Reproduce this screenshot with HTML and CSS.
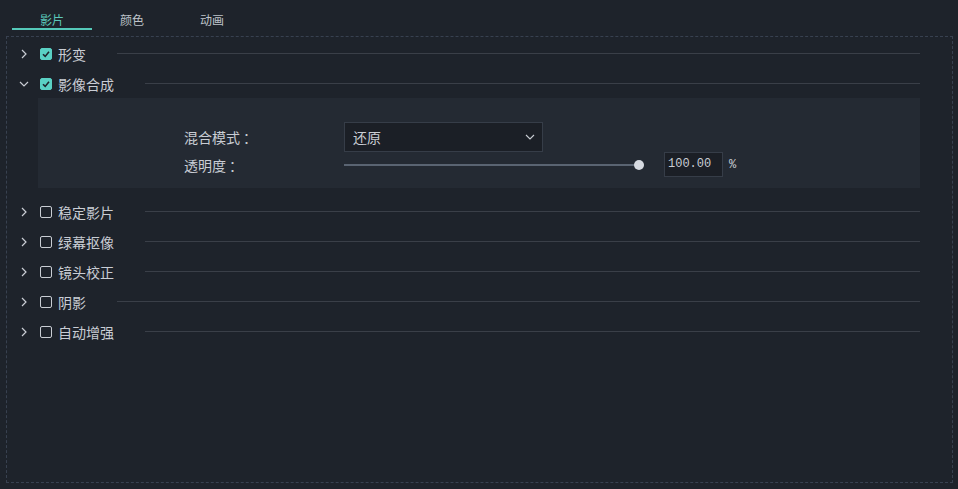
FILE: index.html
```html
<!DOCTYPE html>
<html lang="zh">
  <head>
    <meta charset="UTF-8" />
    <title>影片</title>
    <link rel="stylesheet" href="styles.css">
  </head>
  <body>
    <div class="tabs">
      <div class="tab active">影片</div>
      <div class="tab">颜色</div>
      <div class="tab">动画</div>
    </div>

    <div class="box">
      <div class="row">
        <span class="arrow"><svg width="10" height="10" viewBox="0 0 10 10"><polyline points="3,1 7,5 3,9" /></svg></span>
        <span class="check on"><svg width="12" height="12" viewBox="0 0 12 12"><polyline points="3,6.2 5.2,8.4 9,3.8" /></svg></span>
        <span class="name">形变</span>
        <span class="rule"></span>
      </div>
      <div class="row">
        <span class="arrow"><svg width="10" height="10" viewBox="0 0 10 10"><polyline points="1,3 5,7 9,3" /></svg></span>
        <span class="check on"><svg width="12" height="12" viewBox="0 0 12 12"><polyline points="3,6.2 5.2,8.4 9,3.8" /></svg></span>
        <span class="name">影像合成</span>
        <span class="rule"></span>
      </div>
      <div class="panel">
        <div class="field">
          <label class="lbl">混合模式<span class="colon">：</span></label>
          <div class="select">
            <span>还原</span>
            <svg width="10" height="6" viewBox="0 0 10 6"><polyline points="1,1 5,5 9,1" /></svg>
          </div>
        </div>
        <div class="field slim">
          <label class="lbl">透明度<span class="colon">：</span></label>
          <div class="slider"><span class="thumb"></span></div>
          <div class="num">100.00</div>
          <span class="unit">%</span>
        </div>
      </div>
      <div class="row">
        <span class="arrow"><svg width="10" height="10" viewBox="0 0 10 10"><polyline points="3,1 7,5 3,9" /></svg></span>
        <span class="check"></span>
        <span class="name">稳定影片</span>
        <span class="rule"></span>
      </div>
      <div class="row">
        <span class="arrow"><svg width="10" height="10" viewBox="0 0 10 10"><polyline points="3,1 7,5 3,9" /></svg></span>
        <span class="check"></span>
        <span class="name">绿幕抠像</span>
        <span class="rule"></span>
      </div>
      <div class="row">
        <span class="arrow"><svg width="10" height="10" viewBox="0 0 10 10"><polyline points="3,1 7,5 3,9" /></svg></span>
        <span class="check"></span>
        <span class="name">镜头校正</span>
        <span class="rule"></span>
      </div>
      <div class="row">
        <span class="arrow"><svg width="10" height="10" viewBox="0 0 10 10"><polyline points="3,1 7,5 3,9" /></svg></span>
        <span class="check"></span>
        <span class="name">阴影</span>
        <span class="rule"></span>
      </div>
      <div class="row">
        <span class="arrow"><svg width="10" height="10" viewBox="0 0 10 10"><polyline points="3,1 7,5 3,9" /></svg></span>
        <span class="check"></span>
        <span class="name">自动增强</span>
        <span class="rule"></span>
      </div>
    </div>
  </body>
</html>
```

FILE: styles.css
```css
/* base */
body {
    margin: 0;
    background-color: #1e232b;
    color: #c9cdd4;
    font-family: "Noto Sans CJK SC", "Noto Sans", sans-serif;
    font-size: 14px;
}

/* tabs */
.tabs {
    display: flex;
    padding-left: 12px;
    height: 36px;
}

.tab {
    width: 80px;
    padding-top: 11px;
    height: 17px;
    line-height: 17px;
    font-size: 12px;
    text-align: center;
    color: #bfc3ca;
    border-bottom: 2px solid transparent;
}

.tab.active {
    color: #5cc8ba;
    border-bottom-color: #55c9b9;
}

/* dashed box */
.box {
    margin: 0 5px 0 6px;
    height: 443px;
    border: 1px dashed #384150;
    padding-top: 2px;
}

.row {
    display: flex;
    align-items: center;
    height: 30px;
    padding-left: 9px;
    padding-right: 32px;
}

.arrow {
    width: 16px;
    height: 10px;
    display: flex;
    justify-content: center;
}

.arrow svg polyline {
    fill: none;
    stroke: #c9cdd4;
    stroke-width: 1.2;
}

.check {
    width: 10px;
    height: 10px;
    margin-left: 8px;
    border: 1px solid #c9cdd4;
    border-radius: 2px;
    position: relative;
}

.check.on {
    background-color: #5ad1c4;
    border-color: #5ad1c4;
}

.check svg {
    position: absolute;
    left: -1px;
    top: -1px;
}

.check svg polyline {
    fill: none;
    stroke: #1e232b;
    stroke-width: 1.6;
}

.name {
    margin-left: 6px;
    line-height: 20px;
}

.rule {
    flex: 1;
    height: 1px;
    margin-left: 31px;
    margin-top: -1px;
    background-color: #3a3f48;
}

/* expanded panel */
.panel {
    margin: -1px 32px 9px 31px;
    height: 66px;
    padding: 24px 0 0 146px;
    background-color: #242a33;
}

.field {
    display: flex;
    align-items: center;
    height: 30px;
}

.field.slim {
    height: 25px;
}

.lbl {
    width: 160px;
}

.colon {
    margin-left: 3px;
}

.select {
    box-sizing: border-box;
    width: 199px;
    height: 30px;
    padding: 0 7px 0 8px;
    display: flex;
    align-items: center;
    justify-content: space-between;
    background-color: #1b1f26;
    border: 1px solid #363d48;
}

.select svg polyline {
    fill: none;
    stroke: #c9cdd4;
    stroke-width: 1.1;
}

.slider {
    width: 300px;
    height: 2px;
    background-color: #5a6472;
    position: relative;
}

.thumb {
    position: absolute;
    right: 0;
    top: -4px;
    width: 10px;
    height: 10px;
    border-radius: 50%;
    background-color: #d6dae1;
}

.num {
    box-sizing: border-box;
    width: 59px;
    height: 25px;
    margin-left: 20px;
    padding-left: 3px;
    line-height: 23px;
    font-family: "Liberation Mono", monospace;
    font-size: 12px;
    background-color: #1b1f26;
    border: 1px solid #363d48;
}

.unit {
    margin-left: 6px;
    font-family: "Liberation Mono", monospace;
    font-size: 12px;
}
```
